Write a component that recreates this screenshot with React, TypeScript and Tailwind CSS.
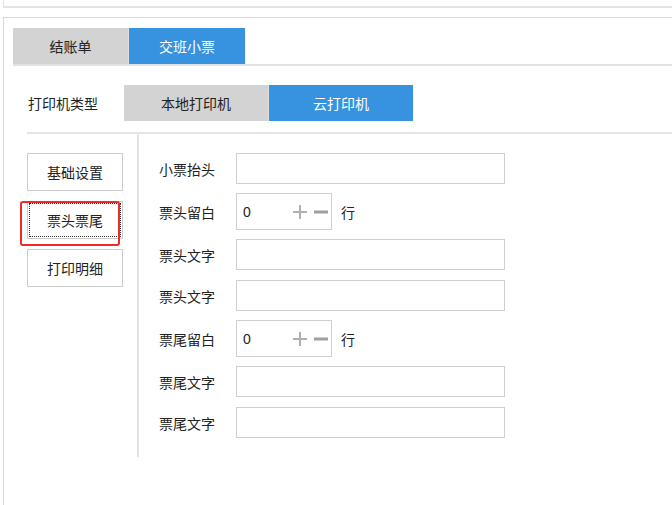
import React from "react";

const font = { fontFamily: '"Noto Sans CJK SC", "Noto Sans", sans-serif' };

function TextRow({ label, mb }: { label: string; mb: string }) {
  return (
    <div className={`flex items-center ${mb}`}>
      <div className="w-[77px] text-[14px] leading-[20px] text-[#222]">{label}</div>
      <div className="h-[31px] w-[269px] border border-[#cfcfcf] bg-white" />
    </div>
  );
}

function SpinRow({ label, mb }: { label: string; mb: string }) {
  return (
    <div className={`flex items-center ${mb}`}>
      <div className="w-[77px] text-[14px] leading-[20px] text-[#222]">{label}</div>
      <div className="flex h-[37px] w-[96px] items-center border border-[#cfcfcf] bg-white pl-[6px]">
        <span className="w-[50px] text-[14px] leading-[20px] text-[#222]" style={{ fontFamily: '"Liberation Sans", Arial, sans-serif' }}>0</span>
        <svg width="14" height="14" viewBox="0 0 14 14">
          <rect x="0" y="6" width="14" height="2" fill="#b0b0b0" />
          <rect x="6" y="0" width="2" height="14" fill="#b0b0b0" />
        </svg>
        <svg width="14" height="14" viewBox="0 0 14 14" className="ml-[7px]">
          <rect x="0" y="5.5" width="14" height="3" fill="#a0a0a0" />
        </svg>
      </div>
      <span className="ml-[9px] text-[14px] leading-[20px] text-[#222]">行</span>
    </div>
  );
}

function NavButton({ label, active }: { label: string; active?: boolean }) {
  return (
    <div className="relative flex h-[38px] w-[96px] items-center justify-center border border-[#cccccc] bg-white text-[14px] text-[#222]">
      {active && (
        <div className="absolute inset-[1px] border border-dotted border-[#333]" />
      )}
      <span className="relative">{label}</span>
    </div>
  );
}

export default function App() {
  return (
    <div className="relative h-[505px] w-[672px] overflow-hidden bg-white" style={font}>
      <div className="ml-[3px] h-[8px] border-b-2 border-l border-[#e3e3e3]" />
      <div className="ml-[3px] mt-[9px] h-[500px] w-[720px] border-l border-t border-[#d9d9d9] pl-[9px] pt-[10px]">
        {/* tabs */}
        <div className="flex h-[38px] border-b-2 border-[#e2e2e2]">
          <div className="flex w-[116px] items-center justify-center border-r border-[#e0e0e0] bg-[#d3d3d3] text-[14px] text-[#222]">
            结账单
          </div>
          <div className="flex w-[116px] items-center justify-center bg-[#3793df] text-[14px] text-white">
            交班小票
          </div>
        </div>
        {/* printer type */}
        <div className="ml-[15px] mt-[19px] flex h-[36px] items-center">
          <div className="w-[96px] text-[14px] text-[#222]">打印机类型</div>
          <div className="flex h-[36px] w-[145px] items-center justify-center border-r border-[#e0e0e0] bg-[#d3d3d3] text-[14px] text-[#222]">
            本地打印机
          </div>
          <div className="flex h-[36px] w-[144px] items-center justify-center bg-[#3793df] text-[14px] text-white">
            云打印机
          </div>
        </div>
        <div className="ml-[14px] mt-[11px] flex border-t-2 border-[#e6e6e6]">
          {/* left nav */}
          <div className="relative flex w-[112px] flex-col gap-[10px] border-r-2 border-[#e3e3e3] pt-[19px]">
            <NavButton label="基础设置" />
            <NavButton label="票头票尾" active />
            <NavButton label="打印明细" />
            <div className="pointer-events-none absolute left-[-7px] top-[67px] h-[45px] w-[100px] rounded-[3px] border-2 border-[#ee2a2a]" />
          </div>
          {/* form */}
          <div className="pl-[20px] pt-[19px] pb-[19px]">
            <TextRow label="小票抬头" mb="mb-[9px]" />
            <SpinRow label="票头留白" mb="mb-[9px]" />
            <TextRow label="票头文字" mb="mb-[10px]" />
            <TextRow label="票头文字" mb="mb-[9px]" />
            <SpinRow label="票尾留白" mb="mb-[9px]" />
            <TextRow label="票尾文字" mb="mb-[10px]" />
            <TextRow label="票尾文字" mb="" />
          </div>
        </div>
      </div>
    </div>
  );
}
